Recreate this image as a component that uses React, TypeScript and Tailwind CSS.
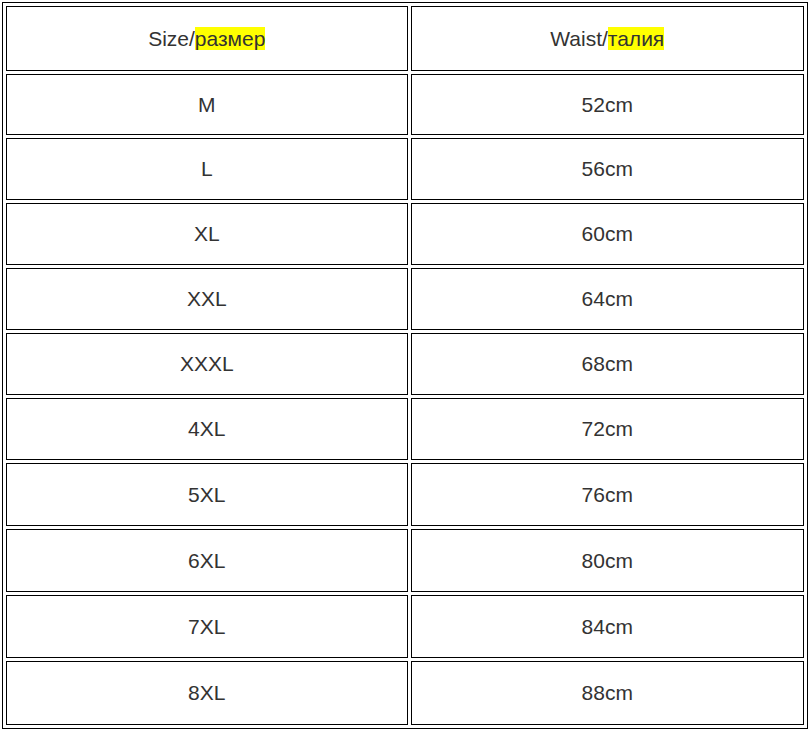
type Row = {
    size: string;
    waist: string;
    h: string;
};

const rows: Row[] = [
    { size: "M", waist: "52cm", h: "h-[61px]" },
    { size: "L", waist: "56cm", h: "h-[62px]" },
    { size: "XL", waist: "60cm", h: "h-[62px]" },
    { size: "XXL", waist: "64cm", h: "h-[62px]" },
    { size: "XXXL", waist: "68cm", h: "h-[62px]" },
    { size: "4XL", waist: "72cm", h: "h-[62px]" },
    { size: "5XL", waist: "76cm", h: "h-[63px]" },
    { size: "6XL", waist: "80cm", h: "h-[63px]" },
    { size: "7XL", waist: "84cm", h: "h-[63px]" },
    { size: "8XL", waist: "88cm", h: "h-[64px]" },
];

const cell = "border border-black p-0 text-center align-middle";

const App: React.FC = () => {
    return (
        <div className="bg-white w-[811px] h-[733px] p-[2px] font-['Liberation_Sans',Arial,sans-serif] text-[21px] text-[#333]">
            <table className="border border-black border-separate border-spacing-[3px] w-[806px]">
                <tbody>
                    <tr>
                        <td className={`${cell} w-[402px] h-[65px]`}>
                            Size/<span className="bg-[#ffff00]">размер</span>
                        </td>
                        <td className={`${cell} w-[394px] h-[65px]`}>
                            Waist/<span className="bg-[#ffff00]">талия</span>
                        </td>
                    </tr>
                    {rows.map(row => (
                        <tr key={row.size}>
                            <td className={`${cell} ${row.h}`}>{row.size}</td>
                            <td className={`${cell} ${row.h}`}>{row.waist}</td>
                        </tr>
                    ))}
                </tbody>
            </table>
        </div>
    )
}

export default App;
